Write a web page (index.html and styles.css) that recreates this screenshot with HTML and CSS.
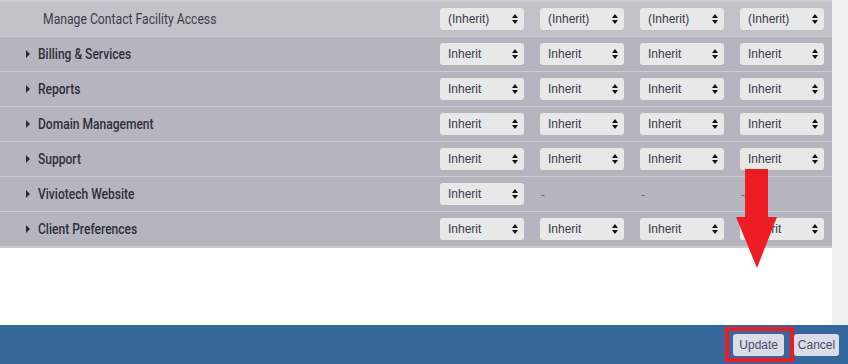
FILE: index.html
```html
<!DOCTYPE html>
<html lang="en">
 <head>
  <meta charset="utf-8">
  <link rel="stylesheet" href="styles.css">
 </head>
 <body>

  <div id="page">
    <div id="main">
      <div id="content">
        <div id="perms">

          <div class="row sub">
            <span class="label"><span class="text">Manage Contact Facility Access</span></span>
            <div class="cells">
              <span class="select">(Inherit)<i class="arrows"></i></span>
              <span class="select">(Inherit)<i class="arrows"></i></span>
              <span class="select">(Inherit)<i class="arrows"></i></span>
              <span class="select">(Inherit)<i class="arrows"></i></span>
            </div>
          </div>

          <div class="row group">
            <span class="label"><i class="caret"></i><span class="text">Billing &amp; Services</span></span>
            <div class="cells">
              <span class="select">Inherit<i class="arrows"></i></span>
              <span class="select">Inherit<i class="arrows"></i></span>
              <span class="select">Inherit<i class="arrows"></i></span>
              <span class="select">Inherit<i class="arrows"></i></span>
            </div>
          </div>

          <div class="row group">
            <span class="label"><i class="caret"></i><span class="text">Reports</span></span>
            <div class="cells">
              <span class="select">Inherit<i class="arrows"></i></span>
              <span class="select">Inherit<i class="arrows"></i></span>
              <span class="select">Inherit<i class="arrows"></i></span>
              <span class="select">Inherit<i class="arrows"></i></span>
            </div>
          </div>

          <div class="row group">
            <span class="label"><i class="caret"></i><span class="text">Domain Management</span></span>
            <div class="cells">
              <span class="select">Inherit<i class="arrows"></i></span>
              <span class="select">Inherit<i class="arrows"></i></span>
              <span class="select">Inherit<i class="arrows"></i></span>
              <span class="select">Inherit<i class="arrows"></i></span>
            </div>
          </div>

          <div class="row group">
            <span class="label"><i class="caret"></i><span class="text">Support</span></span>
            <div class="cells">
              <span class="select">Inherit<i class="arrows"></i></span>
              <span class="select">Inherit<i class="arrows"></i></span>
              <span class="select">Inherit<i class="arrows"></i></span>
              <span class="select">Inherit<i class="arrows"></i></span>
            </div>
          </div>

          <div class="row group">
            <span class="label"><i class="caret"></i><span class="text">Viviotech Website</span></span>
            <div class="cells">
              <span class="select">Inherit<i class="arrows"></i></span>
              <span class="dash">-</span>
              <span class="dash">-</span>
              <span class="dash">-</span>
            </div>
          </div>

          <div class="row group">
            <span class="label"><i class="caret"></i><span class="text">Client Preferences</span></span>
            <div class="cells">
              <span class="select">Inherit<i class="arrows"></i></span>
              <span class="select">Inherit<i class="arrows"></i></span>
              <span class="select">Inherit<i class="arrows"></i></span>
              <span class="select">Inherit<i class="arrows"></i></span>
            </div>
          </div>

        </div><!-- perms -->
      </div>
      <div id="gutter"></div>
    </div>

    <div id="footer">
      <button class="btn">Update</button>
      <button class="btn cancel">Cancel</button>
    </div>
  </div>

  <!-- annotation: highlight on the Update button and arrow pointing at it -->
  <div class="mark-box"></div>
  <svg class="mark-arrow" width="44" height="102" viewBox="0 0 44 102">
    <rect x="9" y="0" width="23" height="50" fill="#ed1c24"/>
    <polygon points="0,48 41,48 21,99" fill="#ed1c24"/>
  </svg>

 </body>
</html>
```

FILE: styles.css
```css
*{box-sizing:border-box;margin:0;padding:0}
html,body{width:848px;height:364px;overflow:hidden;background:#fff}
body{font-family:Roboto,"Liberation Sans",sans-serif;position:relative}
#page{display:flex;flex-flow:column;height:364px}
#main{display:flex;flex:1}
#content{width:832px;background:#fff}
#gutter{width:16px;background:#f0f0f0}
#perms{border-top:2px solid #cdcdd4;border-bottom:2px solid #c9c9d0}
.row{display:flex;align-items:center;height:35px;border-bottom:1px solid #cbcbd3;background:#b6b5bf}
.row:last-child{border-bottom:0;height:34px}
.row.sub{background:#c3c2ca}
.label{width:440px;font-size:14px;color:#3d3c4c;display:flex;align-items:center;white-space:nowrap}
/* condensed look of the original face */
.label .text{display:inline-block;transform:scaleX(0.87);transform-origin:left center}
.sub .label{padding-left:43px}
.group .label{padding-left:26px;font-weight:500;color:#2f2e3b}
.group .label .text{transform:scaleX(0.86)}
.caret{width:0;height:0;border-top:4px solid transparent;border-bottom:4px solid transparent;border-left:4px solid #2a2a35;margin-right:8px}
.cells{display:flex;gap:16px}
.select{width:84px;height:22px;background:#e8e8e8;border-radius:3px;display:flex;align-items:center;justify-content:space-between;padding:0 6px 0 8px;font-family:"Liberation Sans",Arial,sans-serif;font-size:12px;color:#3a3a4a}
.arrows{display:flex;flex-flow:column;gap:2px}
.arrows::before,.arrows::after{content:"";width:0;height:0;border-left:3px solid transparent;border-right:3px solid transparent}
.arrows::before{border-bottom:4px solid #111}
.arrows::after{border-top:4px solid #111}
.dash{width:84px;padding:5px 0 0 1px;font-family:"Liberation Sans",Arial,sans-serif;font-size:12px;color:#6a6a75}
#footer{height:39px;background:#34679a;display:flex;justify-content:flex-end;align-items:center;gap:10px;padding-right:9px}
.btn{height:22px;padding:0 6px;border:0;border-radius:3px;background:#dcdce8;color:#4a4a68;font-family:"Liberation Sans",Arial,sans-serif;font-size:12px}
.btn.cancel{width:45px;padding:0}
.mark-box{position:absolute;left:725px;top:327px;width:69px;height:35px;border:4px solid #ed1c24}
.mark-arrow{position:absolute;left:736px;top:169px}
```
